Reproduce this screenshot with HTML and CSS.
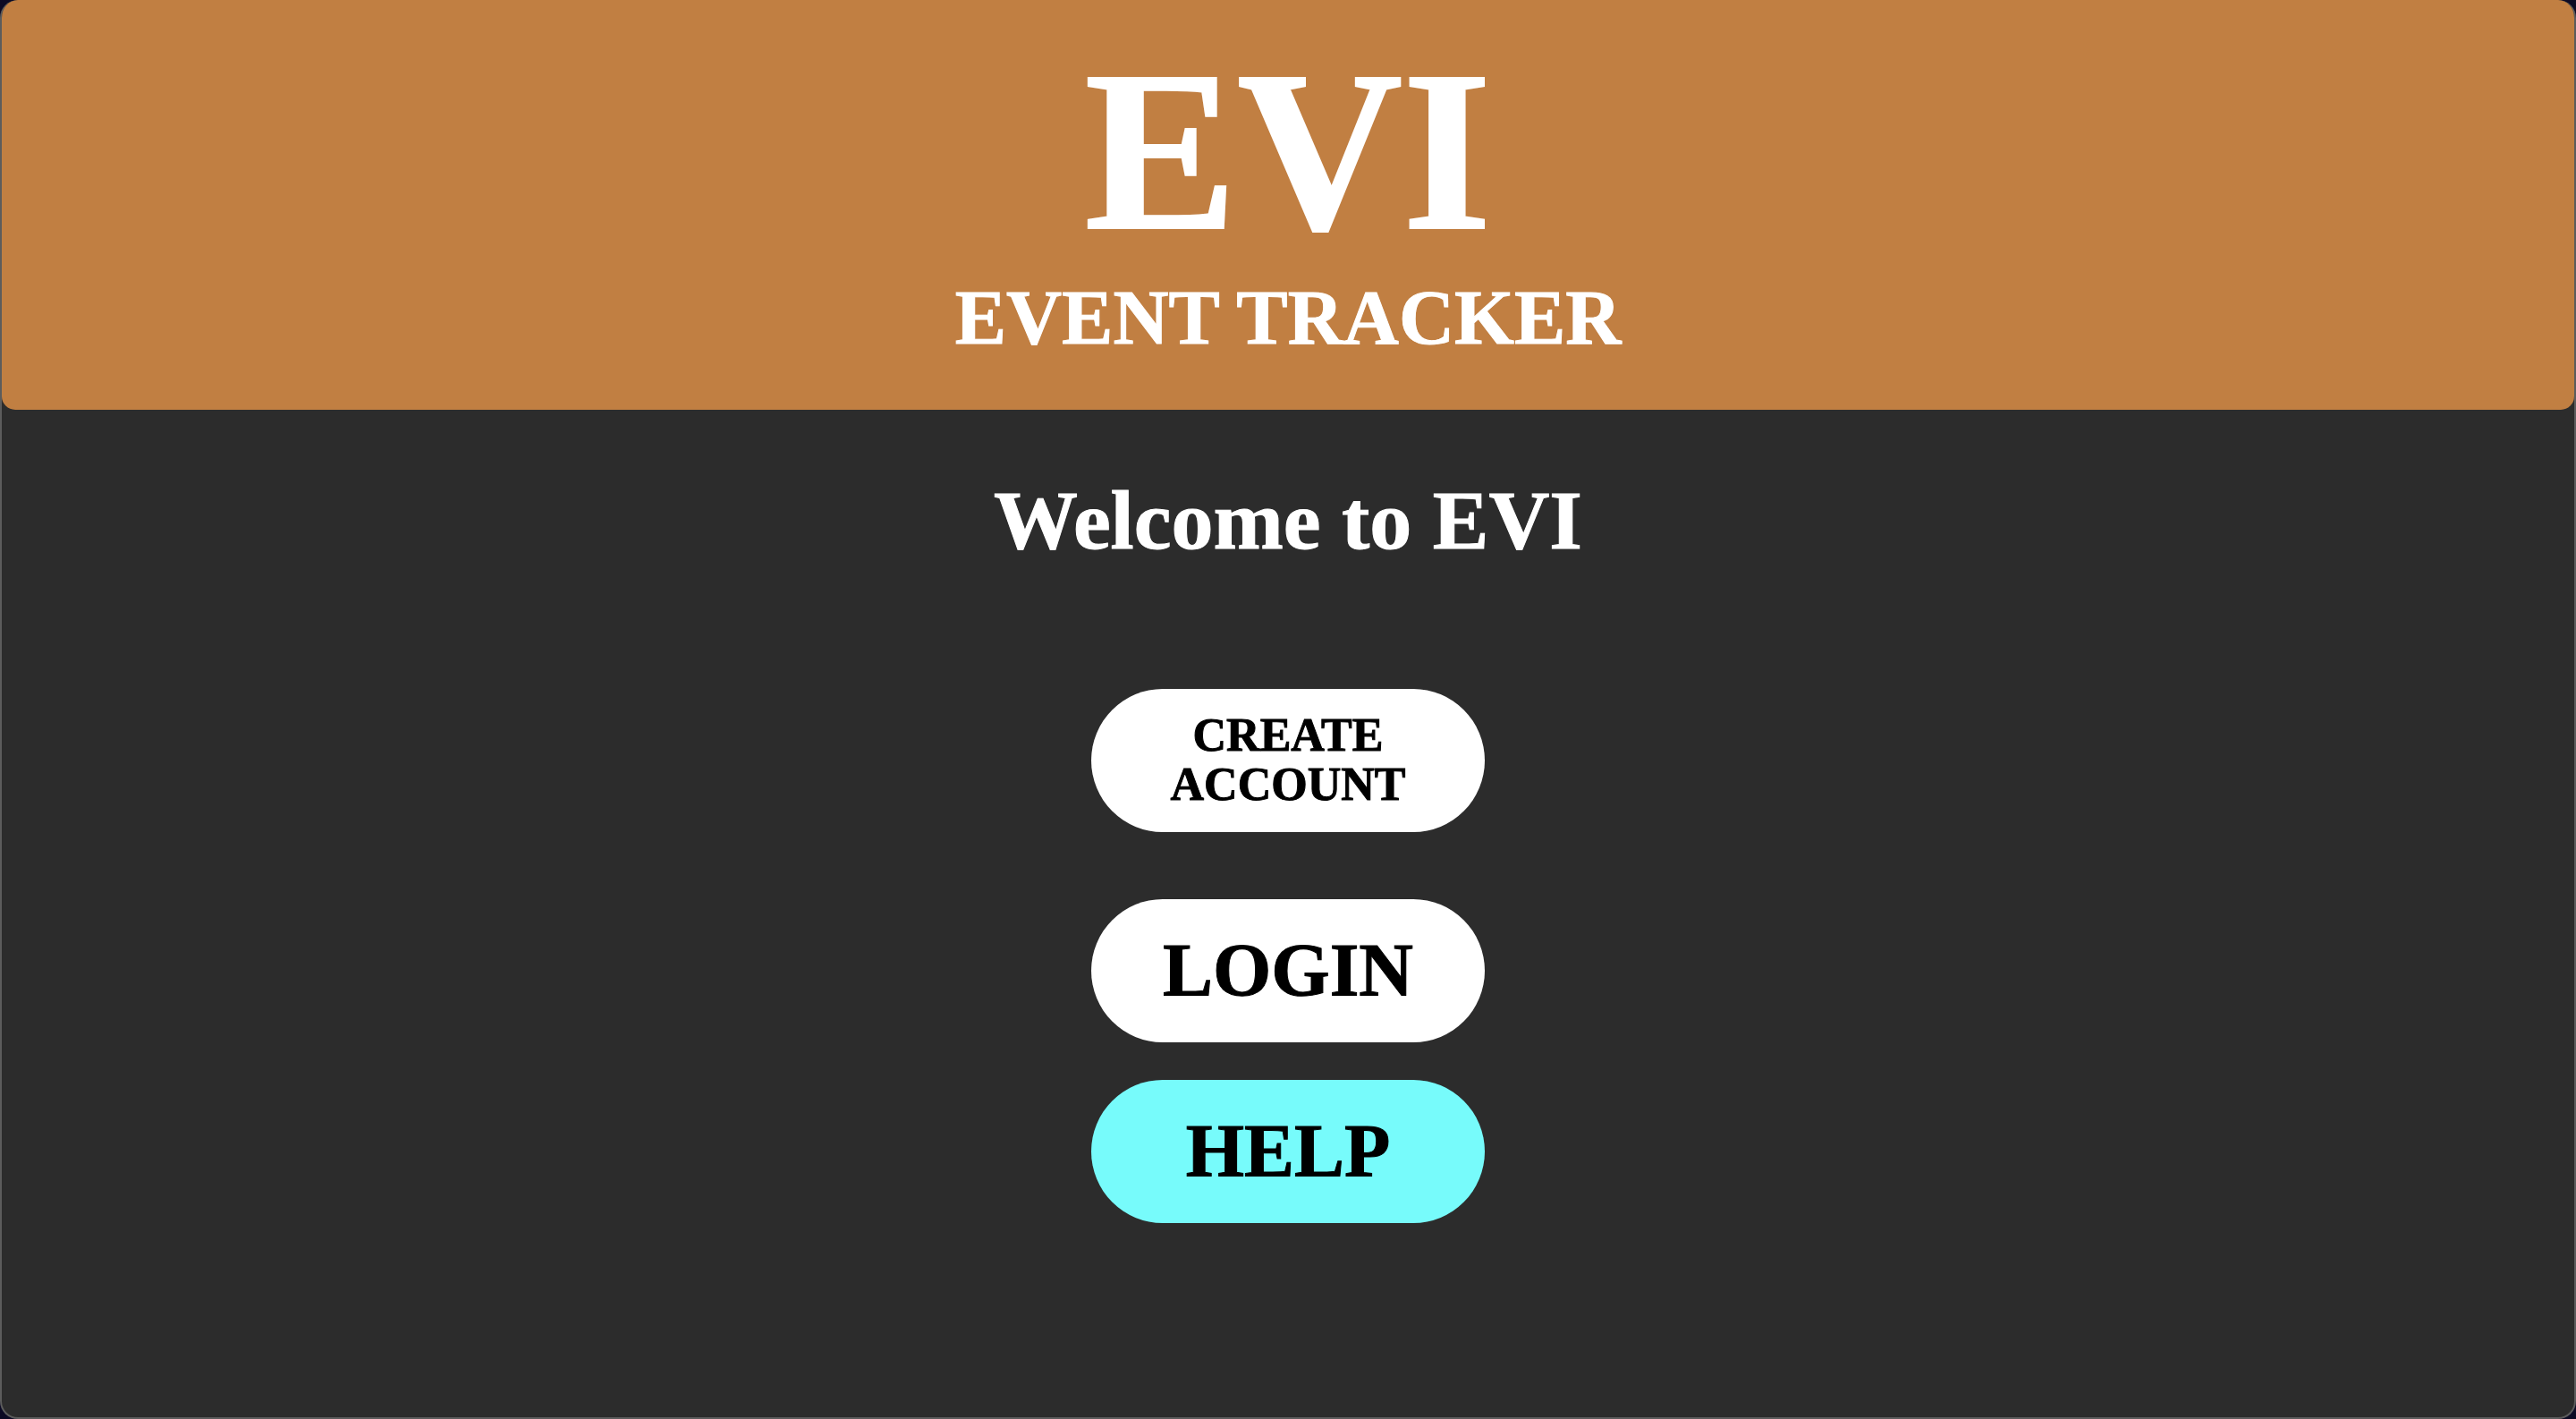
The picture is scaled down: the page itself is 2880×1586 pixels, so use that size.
FILE: index.html
```html
<!DOCTYPE html>
<html lang="en">
<head>
<meta charset="utf-8">
<title>EVI - Event Tracker</title>
<link rel="stylesheet" href="styles.css">
</head>
<body>
<div class="app">
  <header class="hero">
    <h1 class="logo">EVI</h1>
    <p class="tagline">EVENT TRACKER</p>
  </header>
  <main class="content">
    <h2 class="welcome">Welcome to EVI</h2>
    <div class="actions">
      <button class="btn btn-create">CREATE<br>ACCOUNT</button>
      <button class="btn btn-login">LOGIN</button>
      <button class="btn btn-help">HELP</button>
    </div>
  </main>
</div>
</body>
</html>
```

FILE: styles.css
```css
html, body {
  margin: 0;
  padding: 0;
  background: #0c0a24;
}

.app {
  box-sizing: border-box;
  height: 1586px;
  background: #2c2c2c;
  border: 2px solid #5c5c5c;
  border-top: 0;
  border-radius: 20px;
  overflow: hidden;
  font-family: "Liberation Serif", "Times New Roman", serif;
  color: #ffffff;
}

.hero {
  box-sizing: border-box;
  height: 458px;
  background: #c17f42;
  border-radius: 15px;
  padding-top: 41px;
  display: flex;
  flex-direction: column;
  align-items: center;
}

.logo {
  margin: 0;
  font-size: 256px;
  line-height: 1;
  font-weight: bold;
  -webkit-text-stroke: 2px #ffffff;
}

.tagline {
  margin: 15px 0 0;
  font-size: 86px;
  line-height: 1;
  font-weight: bold;
  -webkit-text-stroke: 1px #ffffff;
}

.content {
  display: flex;
  flex-direction: column;
  align-items: center;
  padding-top: 76px;
}

.welcome {
  margin: 0;
  font-size: 94px;
  line-height: 1;
  font-weight: bold;
  -webkit-text-stroke: 1px #ffffff;
}

.actions {
  display: flex;
  flex-direction: column;
  align-items: center;
  margin-top: 142px;
}

.btn {
  width: 440px;
  height: 160px;
  border: 0;
  border-radius: 80px;
  background: #ffffff;
  color: #000000;
  font-family: "Liberation Serif", "Times New Roman", serif;
  font-weight: bold;
  font-size: 84px;
  line-height: 1;
  padding: 0;
  cursor: pointer;
  -webkit-text-stroke: 1px #000000;
}

.btn-create {
  font-size: 52px;
  line-height: 1.05;
}

.btn-login {
  margin-top: 75px;
}

.btn-help {
  margin-top: 42px;
  background: #77fbfb;
}
```
